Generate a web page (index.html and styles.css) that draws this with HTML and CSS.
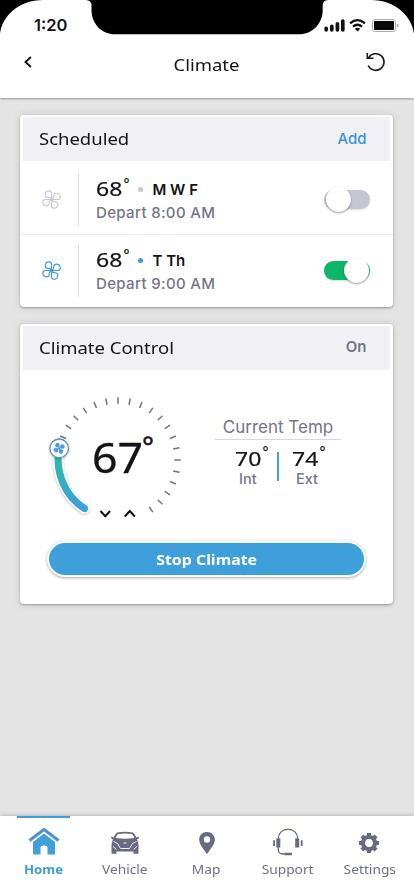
FILE: index.html
```html
<!DOCTYPE html>
<html lang="en">
<head>
<meta charset="utf-8">
<title>Climate</title>
<link rel="stylesheet" href="styles.css">
</head>
<body>
<svg class="defs" width="0" height="0">
  <defs>
    <g id="fan">
      <path id="blade" d="M9.500 9.500V3.200C9.500 1.400 8.400 .8 7 .8C4.600 .8 3.200 2.700 3.200 4.700C3.200 6.600 4.500 7.300 6 7.300C7.800 7.300 9 8 9.500 9.500Z"/>
      <use href="#blade" transform="rotate(90 9.500 9.500)"/>
      <use href="#blade" transform="rotate(180 9.500 9.500)"/>
      <use href="#blade" transform="rotate(270 9.500 9.500)"/>
    </g>
    <path id="tick" d="M68 7.300V13.700"/>
    <linearGradient id="heat" x1="0" y1="0" x2="0" y2="1">
      <stop offset="0" stop-color="#2fb8a4"/>
      <stop offset=".45" stop-color="#35b3b4"/>
      <stop offset="1" stop-color="#3f9fdc"/>
    </linearGradient>
  </defs>
</svg>
<div class="screen">
  <header class="top">
    <div class="status">
      <span class="time">1:20</span>
      <svg class="signals" width="76" height="16" viewBox="0 0 76 16">
        <path d="M2.700 11.300v1.500M8.300 9.400v3.400M13.900 6.800v6M19.300 4v8.800" stroke="#111" stroke-width="3.700" stroke-linecap="round" transform="translate(-.5 0)"/>
        <g fill="none" stroke="#111" stroke-width="2.300"><path d="M26 6.300q7.500-6.300 15 0"/><path d="M29 9.700q4.500-4 9 0"/></g>
        <path d="M30.800 11.800q2.700-2 5.400 0L33.500 14.500z" fill="#111"/>
        <rect x="48.500" y="2.500" width="23" height="12" rx="2.800" fill="#fff" stroke="#aaa"/>
        <rect x="50" y="4" width="20" height="9" rx="1" fill="#0a0a0a"/>
        <path d="M73.700 7v3" stroke="#999" stroke-width="1.200"/>
      </svg>
    </div>
    <div class="bar">
      <svg class="back" width="8" height="12" viewBox="0 0 8 12"><path d="M6.900 1 1.500 6l5.400 5" fill="none" stroke="#111" stroke-width="1.900"/></svg>
      <h1 class="wide">Climate</h1>
      <svg class="reset" width="20" height="20" viewBox="0 0 20 20"><path d="M2.200 13.500A8.300 8.300 0 1 0 2.700 5.600M1.300 1v5.300H7.500" fill="none" stroke="#1a1a1a" stroke-width="1.600"/></svg>
    </div>
    <svg class="notch" width="414" height="36" viewBox="0 0 414 36"><path d="M0 0H43C19 0 2 16 0 34ZM414 0H371C395 0 412 16 414 34ZM86 0Q91.500 .5 91.500 5V10C91.500 24 102 34.300 115 34.300H299C312 34.300 322.700 24 322.700 10V5Q322.700 .5 328 0Z"/></svg>
  </header>

  <main class="content">
    <section class="card">
      <div class="card-head"><h2 class="wide">Scheduled</h2><a class="add">Add</a></div>
      <div class="row">
        <svg class="fan" width="19" height="19" viewBox="0 0 19 19"><use href="#fan"/></svg>
        <div class="info">
          <div class="line"><span class="temp wide">68</span><span class="deg">°</span><i class="dot"></i><b>M W F</b></div>
          <div class="depart">Depart 8:00 AM</div>
        </div>
        <div class="toggle"></div>
      </div>
      <div class="row active">
        <svg class="fan" width="19" height="19" viewBox="0 0 19 19"><use href="#fan"/></svg>
        <div class="info">
          <div class="line"><span class="temp wide">68</span><span class="deg">°</span><i class="dot"></i><b>T Th</b></div>
          <div class="depart">Depart 9:00 AM</div>
        </div>
        <div class="toggle"></div>
      </div>
    </section>

    <section class="card control">
      <div class="card-head"><h2 class="wide">Climate Control</h2><span class="state">On</span></div>
      <div class="panel">
        <div class="dial">
          <svg width="136" height="136" viewBox="0 0 136 136">
            <g stroke="#73737f" stroke-width="1.500">
              <use href="#tick" transform="rotate(-67.500 68 70)"/>
              <use href="#tick" transform="rotate(-56.250 68 70)"/><use href="#tick" transform="rotate(-45 68 70)"/>
              <use href="#tick" transform="rotate(-33.750 68 70)"/><use href="#tick" transform="rotate(-22.500 68 70)"/>
              <use href="#tick" transform="rotate(-11.250 68 70)"/><use href="#tick"/>
              <use href="#tick" transform="rotate(11.250 68 70)"/><use href="#tick" transform="rotate(22.500 68 70)"/>
              <use href="#tick" transform="rotate(33.750 68 70)"/><use href="#tick" transform="rotate(45 68 70)"/>
              <use href="#tick" transform="rotate(56.250 68 70)"/><use href="#tick" transform="rotate(67.500 68 70)"/>
              <use href="#tick" transform="rotate(78.750 68 70)"/><use href="#tick" transform="rotate(90 68 70)"/>
              <use href="#tick" transform="rotate(101.250 68 70)"/><use href="#tick" transform="rotate(112.500 68 70)"/>
              <use href="#tick" transform="rotate(123.750 68 70)"/><use href="#tick" transform="rotate(135 68 70)"/>
              <use href="#tick" transform="rotate(146.250 68 70)"/>
            </g>
            <g class="lifted" fill="none" stroke-linecap="round">
              <path d="M9 58.500C5 83 15 106 34.500 118.500" stroke="#fff" stroke-width="10.500"/>
              <path d="M9 58.500C5 83 15 106 34.500 118.500" stroke="url(#heat)" stroke-width="7.200"/>
            </g>
            <g class="lifted"><circle cx="9.200" cy="58.300" r="9.300" fill="#fff" stroke="#5b91bf" stroke-width="1.300"/></g>
            <use href="#fan" transform="translate(3.500 52.600) scale(.6)" fill="#4a9ad8" stroke="#4a9ad8" stroke-width="1"/>
            <path d="M50.500 121l4.800 5.200 4.800-5.200M74.800 126.500l5-5.500 5 5.500" fill="none" stroke="#111" stroke-width="2"/>
          </svg>
          <div class="reading"><span class="wide">67</span><span class="big-deg">°</span></div>
        </div>
        <div class="current">
          <div class="caption">Current Temp</div>
          <div class="pair">
            <div class="cell"><div><span class="temp wide">70</span><span class="deg">°</span></div><small>Int</small></div>
            <div class="cell"><div><span class="temp wide">74</span><span class="deg">°</span></div><small>Ext</small></div>
          </div>
        </div>
      </div>
      <button class="stop"><span class="wide">Stop Climate</span></button>
    </section>
  </main>

  <nav class="tabs">
    <a class="tab on">
      <svg width="32" height="28" viewBox="0 0 32 28"><path d="M1.500 12.500 16 1.500 30.500 12.500" fill="none" stroke="#4a94cc" stroke-width="3"/><path d="M16 5.500 27 14V26.500H19.500V19.500Q19.500 17.500 16 17.500T12.500 19.500V26.500H5V14Z" fill="#3fa0dc"/></svg>
      <span class="wide">Home</span></a>
    <a class="tab">
      <svg width="32" height="28" viewBox="0 0 32 28"><path fill="#676a80" fill-rule="evenodd" d="M8 4.500Q16 3 24 4.500Q25.500 5.500 27.500 9.500L29.800 8.500V10.500L28 11.500Q29.500 14 29.500 17V25.700H24.500V23.500H7.500V25.700H2.500V17Q2.500 14 4 11.500L2.200 10.500V8.500L4.500 9.500Q6.500 5.500 8 4.500ZM9 6Q7.500 7.500 6.500 10Q16 11.500 25.500 10Q24.500 7.500 23 6Q16 5 9 6Z"/><g fill="none" stroke="#fff" stroke-width=".9"><path d="M4.500 13.500 8.500 15.500 11.500 20.500H20.500L23.500 15.500 27.500 13.500M14.500 15h3M4 18.500l3.500 3M28 18.500l-3.500 3"/></g></svg>
      <span class="wide">Vehicle</span></a>
    <a class="tab">
      <svg width="32" height="28" viewBox="0 0 32 28"><path fill="#676a80" fill-rule="evenodd" d="M16 4C11.500 4 8.200 7.300 8.200 11.500C8.200 16.500 12.500 21 16 26C19.500 21 23.800 16.500 23.800 11.500C23.800 7.300 20.500 4 16 4ZM16 8.300a3.200 3.200 0 1 1 0 6.400a3.200 3.200 0 0 1 0-6.400Z"/></svg>
      <span class="wide">Map</span></a>
    <a class="tab">
      <svg width="32" height="28" viewBox="0 0 32 28"><g fill="none" stroke="#676a80"><path d="M6.300 10C7 4.500 11 1.300 16 1.300S25 4.500 25.700 10M6.300 19V21.500Q6.300 26 11 26H13" stroke-width="1.300"/><path d="M12.500 26H20" stroke-width="2.500"/><path d="M6.300 10.300V19.500M25.200 10.300V19.500" stroke-width="4"/><path d="M2 12.200V18M29.700 12.200V18" stroke-width="1.800"/></g></svg>
      <span class="wide">Support</span></a>
    <a class="tab">
      <svg width="32" height="28" viewBox="0 0 32 28"><circle cx="16" cy="15" r="6" fill="none" stroke="#676a80" stroke-width="4.200"/><path d="M16 5v3M16 22v3M6 15h3M23 15h3M8.900 7.900l2.200 2.200M20.900 19.900l2.200 2.200M8.900 22.100l2.200-2.200M20.900 10.100l2.200-2.200" stroke="#676a80" stroke-width="4.200"/></svg>
      <span class="wide">Settings</span></a>
  </nav>
</div>
</body>
</html>
```

FILE: styles.css
```css
* { box-sizing: border-box; }
body { margin: 0; background: #e4e4e4; color: #141414; font-family: Inter, sans-serif; }
.defs { position: absolute; }
h1, h2 { margin: 0; font-weight: 400; font-size: 16.5px; line-height: 22px; }
.wide { display: inline-block; font-family: "Noto Sans", sans-serif; transform: scaleX(1.12); }
.screen { width: 414px; height: 896px; display: flex; flex-direction: column; overflow: hidden; }

.top { position: relative; height: 98px; background: #fff; box-shadow: 0 1px 2px rgba(0,0,0,.35); }
.notch { position: absolute; top: 0; left: 0; }
.status { display: flex; justify-content: space-between; padding: 16px 14px 0 34px; height: 45px; }
.signals { margin-top: 1px; }
.time { font-size: 16.5px; line-height: 18px; font-weight: 600; }
.bar { display: flex; justify-content: space-between; padding: 6px 28px 0 24px; }
.back { margin-top: 5px; }
.bar h1 { margin: 3px 0 0 14px; }
.reset { margin-top: 1px; }

.content { flex: 1; padding: 17px 21px 0 20px; display: flex; flex-direction: column; gap: 17.5px; }
.card { height: 191.5px; background: #fff; border-radius: 4px; box-shadow: 0 1px 2px rgba(0,0,0,.3), 0 0 8px rgba(0,0,0,.12); }
.control { height: 279.5px; }
.card-head { height: 44px; display: flex; justify-content: space-between; align-items: center; padding: 0 23.5px 0 16px; background: #f1f1f5; position: relative; margin: 0 3px; top: 2px; }
.card-head h2 { transform-origin: left; }
.control h2 { margin-top: -1px; }
.add { color: #3a93d3; font-size: 15px; font-weight: 500; margin-top: -2px; }
.state { color: #73758a; font-size: 15px; font-weight: 600; margin-top: -3px; }

.row { height: 70px; display: flex; align-items: center; padding: 0 23px 0 22px; color: #c9c9d4; }
.card-head + .row { border-bottom: 1.5px solid #eeeef0; height: 76px; padding-top: 5px; }
.fan { fill: none; stroke: currentColor; stroke-width: 1.15; margin-top: 1px; }
.info { flex: 1; height: 53px; margin-left: 17px; padding-left: 17px; border-left: 1px solid #dfdfe3; }
.line { display: flex; height: 30px; align-items: center; color: #141414; }
.temp { font-size: 20.5px; line-height: 28px; transform-origin: left; -webkit-text-stroke: .2px; }
.deg { font-family: "Noto Sans", sans-serif; font-size: 14px; line-height: 14px; margin: -8px 0 0 4px; align-self: center; -webkit-text-stroke: .2px; }
.dot { width: 5px; height: 5px; border-radius: 50%; background: #c9c9d4; margin: 4px 9px 0 9px; }
.line b { font-weight: 600; font-size: 15px; margin-top: 3px; }
.depart { color: #73758a; font-size: 15px; font-weight: 500; line-height: 20px; letter-spacing: .35px; }
.toggle { width: 46px; height: 19px; border-radius: 10px; background: #c5c6d2; display: flex; align-items: center; padding-left: 2px; margin-top: 1px; box-shadow: 0 1px 2px rgba(0,0,0,.15); }
.toggle::before { content: ""; width: 25px; height: 25px; border-radius: 50%; background: #fff; box-shadow: 0 1px 2px rgba(0,0,0,.4); }
.active { color: #3f9bd9; }
.active .dot { background: #3f9bd9; }
.active .toggle { background: #0cb567; padding-left: 20px; }

.panel { height: 173px; display: flex; }
.dial { position: relative; width: 136px; margin: 22px 0 0 30px; }
.dial svg { overflow: visible; }
.reading { position: absolute; left: 42px; top: 39px; font-size: 41px; line-height: 56px; display: flex; }
.reading .wide { transform-origin: left; transform: scaleX(1.09); -webkit-text-stroke: .3px; }
.big-deg { font-family: "Noto Sans", sans-serif; font-size: 28px; line-height: 33px; margin-left: 3px; -webkit-text-stroke: .5px; }
.current { width: 126px; margin: 46px 0 0 29px; color: #73758a; text-align: center; }
.caption { font-size: 17px; line-height: 26px; height: 26px; border-bottom: 1px solid #d8d8dc; white-space: nowrap; }
.pair { display: flex; padding: 4px 0 0 6px; }
.cell { width: 58px; height: 49px; padding-left: 14px; text-align: left; }
.cell > div { display: flex; color: #141414; height: 26px; }
.cell .deg { margin-top: -10px; }
.cell small { display: block; font-size: 14.5px; line-height: 18px; font-weight: 500; padding-left: 4px; }
.cell:first-child { background: linear-gradient(#4a9fd8, #4a9fd8) right 8px / 2px 29px no-repeat; }
.cell + .cell { padding-left: 13px; }
.stop { display: flex; align-items: center; justify-content: center; width: 319px; height: 36px; margin: 0 0 0 27px; padding: 0; border: 2px solid #f2fbff; border-radius: 18px; background: #3f9fdb; color: #fff; font-size: 15px; box-shadow: 0 1px 3px rgba(0,0,0,.35); }
.stop .wide { font-weight: 700; transform: scaleX(1.06); }
.lifted { filter: drop-shadow(0 1px 1px rgba(0,0,0,.25)); }

.tabs { height: 80px; background: #fff; display: flex; padding: 0 4px 0 3px; box-shadow: 0 -1px 4px rgba(0,0,0,.2); }
.tab { flex: 1; display: flex; flex-direction: column; align-items: center; padding-top: 10px; color: #6f7184; font-size: 12.5px; line-height: 18px; border-top: 2px solid transparent; }
.tab span { margin-top: 5px; transform: scaleX(1.1); }
.on { color: #3f9bd9; background: linear-gradient(#3f9bd9, #3f9bd9) center top / 53px 2px no-repeat border-box; }
.on span { font-weight: 700; transform: scaleX(1.06); }
```
